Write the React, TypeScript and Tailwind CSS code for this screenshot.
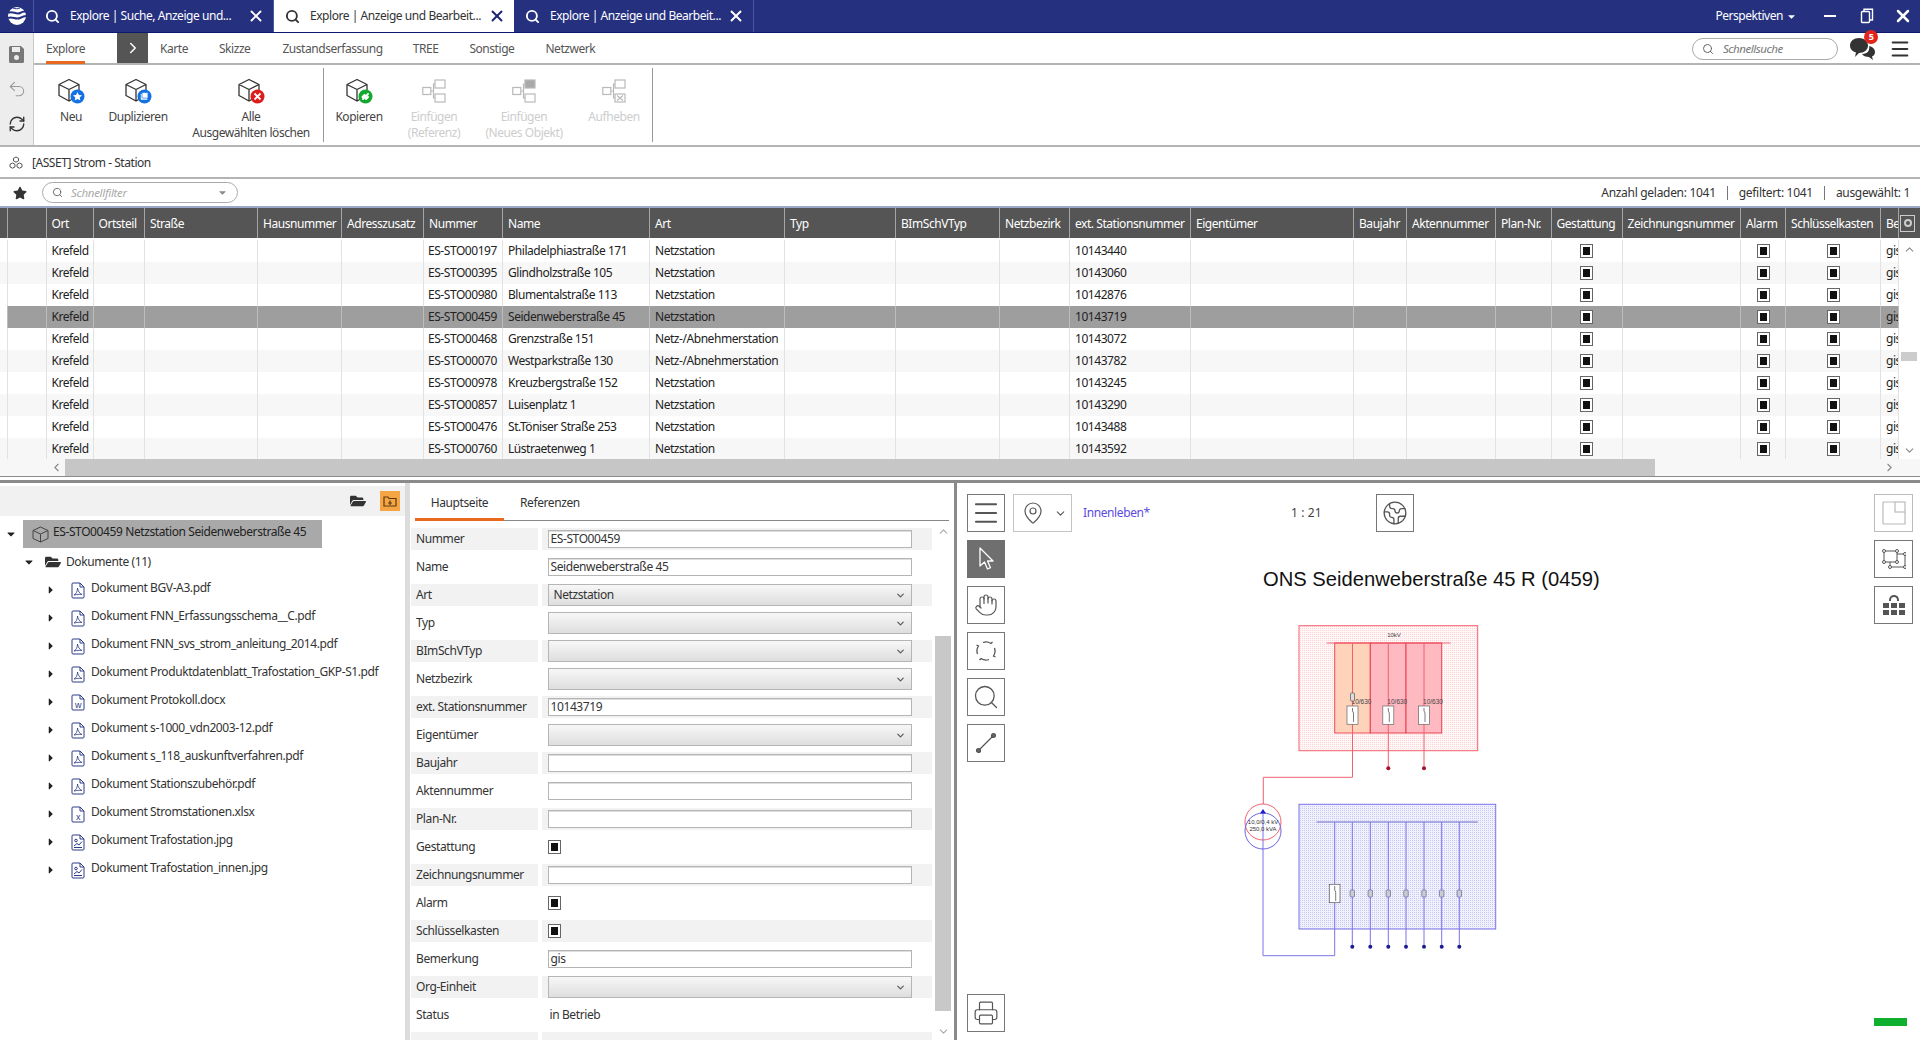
import {
  ChevronDown,
  ChevronLeft,
  ChevronRight,
  ChevronUp,
  Earth,
  Hand,
  MapPin,
  Menu,
  Printer,
  RefreshCw,
  Search,
  Undo2,
  X,
} from "lucide-react";
import { FaFolderOpen, FaStar, FaCaretDown, FaCaretRight } from "react-icons/fa";

const FONT = "font-['Noto_Sans','Open_Sans',sans-serif]";

const GRID =
  "grid grid-cols-[8px_38.5px_47px_51.5px_113px_84px_82px_79px_147px_135px_111px_104px_70px_121px_163px_53px_89px_55.5px_71px_118.5px_45px_95px_18px]";

const COLUMNS = [
  "",
  "",
  "Ort",
  "Ortsteil",
  "Straße",
  "Hausnummer",
  "Adresszusatz",
  "Nummer",
  "Name",
  "Art",
  "Typ",
  "BImSchVTyp",
  "Netzbezirk",
  "ext. Stationsnummer",
  "Eigentümer",
  "Baujahr",
  "Aktennummer",
  "Plan-Nr.",
  "Gestattung",
  "Zeichnungsnummer",
  "Alarm",
  "Schlüsselkasten",
  "Be",
];

const ROWS = [
  ["ES-STO00197", "Philadelphiastraße 171", "Netzstation", "10143440"],
  ["ES-STO00395", "Glindholzstraße 105", "Netzstation", "10143060"],
  ["ES-STO00980", "Blumentalstraße 113", "Netzstation", "10142876"],
  ["ES-STO00459", "Seidenweberstraße 45", "Netzstation", "10143719"],
  ["ES-STO00468", "Grenzstraße 151", "Netz-/Abnehmerstation", "10143072"],
  ["ES-STO00070", "Westparkstraße 130", "Netz-/Abnehmerstation", "10143782"],
  ["ES-STO00978", "Kreuzbergstraße 152", "Netzstation", "10143245"],
  ["ES-STO00857", "Luisenplatz 1", "Netzstation", "10143290"],
  ["ES-STO00476", "St.Töniser Straße 253", "Netzstation", "10143488"],
  ["ES-STO00760", "Lüstraetenweg 1", "Netzstation", "10143592"],
];

const DOCS: [string, string][] = [
  ["BGV-A3.pdf", "pdf"],
  ["FNN_Erfassungsschema__C.pdf", "pdf"],
  ["FNN_svs_strom_anleitung_2014.pdf", "pdf"],
  ["Produktdatenblatt_Trafostation_GKP-S1.pdf", "pdf"],
  ["Protokoll.docx", "w"],
  ["s-1000_vdn2003-12.pdf", "pdf"],
  ["s_118_auskunftverfahren.pdf", "pdf"],
  ["Stationszubehör.pdf", "pdf"],
  ["Stromstationen.xlsx", "x"],
  ["Trafostation.jpg", "img"],
  ["Trafostation_innen.jpg", "img"],
];

type Field = { label: string; kind: "input" | "select" | "check" | "text" | "none"; value?: string };

const FIELDS: Field[] = [
  { label: "Nummer", kind: "input", value: "ES-STO00459" },
  { label: "Name", kind: "input", value: "Seidenweberstraße 45" },
  { label: "Art", kind: "select", value: "Netzstation" },
  { label: "Typ", kind: "select" },
  { label: "BImSchVTyp", kind: "select" },
  { label: "Netzbezirk", kind: "select" },
  { label: "ext. Stationsnummer", kind: "input", value: "10143719" },
  { label: "Eigentümer", kind: "select" },
  { label: "Baujahr", kind: "input" },
  { label: "Aktennummer", kind: "input" },
  { label: "Plan-Nr.", kind: "input" },
  { label: "Gestattung", kind: "check" },
  { label: "Zeichnungsnummer", kind: "input" },
  { label: "Alarm", kind: "check" },
  { label: "Schlüsselkasten", kind: "check" },
  { label: "Bemerkung", kind: "input", value: "gis" },
  { label: "Org-Einheit", kind: "select" },
  { label: "Status", kind: "text", value: "in Betrieb" },
  { label: "", kind: "none" },
];

function Logo() {
  return (
    <svg width="20" height="20" viewBox="0 0 20 20">
      <circle cx="10" cy="10" r="9" fill="#fff" />
      <path d="M1 7c4-3 8 2 12 0s5-2 6-1M1 12c4-2 8 2 12 0s5-2 6-2" stroke="#25307f" strokeWidth="2" fill="none" />
      <path d="M6 2c2 1 5 1 7 0" stroke="#25307f" strokeWidth="1" fill="none" />
    </svg>
  );
}

function Tab({ label, active }: { label: string; active?: boolean }) {
  return (
    <div
      className={`flex w-[240px] items-center h-full pl-[11px] pr-[8px] ${
        active ? "bg-white text-[#333]" : "text-white border-r border-[#4a58a3]"
      }`}
    >
      <Search size={15} strokeWidth={3} className={active ? "text-[#333]" : "text-white"} />
      <span className="ml-[10px] flex-1 whitespace-nowrap text-[12px] tracking-[-0.45px]">{label}</span>
      <X size={18} strokeWidth={2.5} className={active ? "text-[#1b2470]" : "text-white"} />
    </div>
  );
}

function TitleBar() {
  return (
    <div className="flex h-[33px] items-stretch bg-[#25307f] border-b border-[#0c1a6e]">
      <div className="flex w-[34px] items-center justify-center border-r border-[#4a58a3]">
        <Logo />
      </div>
      <Tab label="Explore | Suche, Anzeige und..." />
      <Tab label="Explore | Anzeige und Bearbeit..." active />
      <Tab label="Explore | Anzeige und Bearbeit..." />
      <div className="ml-auto flex items-center text-white">
        <span className="text-[12px] tracking-[-0.45px]">Perspektiven</span>
        <FaCaretDown size={11} className="ml-[3px] mr-[27px]" />
        <div className="h-[2px] w-[12px] bg-white mr-[24px]" />
        <svg width="14" height="16" viewBox="0 0 14 16" className="mr-[19px]" fill="none" stroke="#fff" strokeWidth="1.4">
          <rect x="1.5" y="3.5" width="8" height="11" rx="1" />
          <path d="M4 3V1.2h8.5V12h-2.6" />
        </svg>
        <X size={20} strokeWidth={3} className="mr-[7px]" />
      </div>
    </div>
  );
}

function CubeIcon({ badge, color }: { badge: string; color: string }) {
  return (
    <svg width="28" height="26" viewBox="0 0 28 26" fill="none">
      <path d="M12 1.5 22 6.5v11L12 23 2 17.5v-11ZM2 6.5l10 5 10-5M12 11.5V23" stroke="#333" strokeWidth="1.3" strokeLinejoin="round" />
      <circle cx="20.5" cy="18.5" r="7" fill={color} />
      {badge === "star" && (
        <path d="m20.5 14 1.4 2.9 3.1.4-2.3 2.1.6 3.1-2.8-1.5-2.8 1.5.6-3.1-2.3-2.1 3.1-.4Z" fill="#fff" />
      )}
      {badge === "copy" && (
        <g fill="#fff">
          <rect x="16.8" y="15.8" width="6.5" height="6" rx="0.5" />
          <rect x="18" y="14.6" width="6" height="5.5" rx="0.5" stroke={color} strokeWidth="0.7" />
        </g>
      )}
      {badge === "x" && <path d="m17.5 15.5 6 6m0-6-6 6" stroke="#fff" strokeWidth="1.8" />}
      {badge === "link" && (
        <path d="m18 21 5-5M17.5 19l2-2m1.5 4 2-2" stroke="#fff" strokeWidth="2" strokeLinecap="round" />
      )}
    </svg>
  );
}

function TreeBoxes({ kind }: { kind: "ref" | "new" | "cancel" }) {
  return (
    <svg width="24" height="24" viewBox="0 0 24 24" fill="none" stroke="#b9b9b9" strokeWidth="1.2">
      <rect x="0.8" y="8.5" width="8" height="7" />
      <rect x="13" y="1" width="10" height="8" fill={kind === "new" ? "#a9a9a9" : "none"} />
      <rect x="13" y="15" width="10" height="8" />
      <path d="M9 12h2.5V5H13M11.5 12v7H13" />
      {kind === "cancel" && <path d="m15 16.5 6 5m0-5-6 5" />}
    </svg>
  );
}

function RibbonButton({
  width,
  lines,
  icon,
  disabled,
}: {
  width: string;
  lines: string[];
  icon: React.ReactNode;
  disabled?: boolean;
}) {
  return (
    <div className={`flex ${width} flex-col items-center pt-[13px] ${disabled ? "text-[#cdcdcd]" : "text-[#444]"}`}>
      <div className="flex h-[26px] items-center justify-center">{icon}</div>
      <div className="mt-[5px] text-center text-[12px] leading-[16px] tracking-[-0.45px] whitespace-nowrap">
        {lines.map((l) => (
          <div key={l}>{l}</div>
        ))}
      </div>
    </div>
  );
}

function Ribbon() {
  const tabs: [string, string][] = [
    ["Karte", "ml-[12px]"],
    ["Skizze", "ml-[31px]"],
    ["Zustandserfassung", "ml-[32px]"],
    ["TREE", "ml-[30px]"],
    ["Sonstige", "ml-[31px]"],
    ["Netzwerk", "ml-[31px]"],
  ];
  return (
    <div className="flex h-[114px] border-b-2 border-[#b4b4b4]">
      <div className="flex w-[34px] flex-col items-center border-r border-[#c8c8c8] bg-[#ededed] pt-[12px] text-[#6f6f6f]">
        <svg width="17" height="19" viewBox="0 0 17 19">
          <path d="M1 2.5A1.5 1.5 0 0 1 2.5 1H13l3 3v12.5a1.5 1.5 0 0 1-1.5 1.5h-12A1.5 1.5 0 0 1 1 16.500Z" fill="#777" />
          <rect x="4" y="2" width="8" height="5" fill="#ededed" />
          <circle cx="8.500" cy="12.500" r="2.500" fill="#ededed" />
        </svg>
        <Undo2 size={20} strokeWidth={1.3} className="mt-[15px] text-[#9a9a9a]" />
        <RefreshCw size={18} strokeWidth={1.8} className="mt-[16px] text-[#333]" />
      </div>
      <div className="flex flex-1 flex-col">
        <div className="flex h-[32px] items-stretch border-b-2 border-[#b4b4b4] text-[12px] tracking-[-0.45px] text-[#555]">
          <div className="relative ml-[12px] flex w-[39px] items-center justify-center pt-[2px]">
            Explore
            <div className="absolute bottom-[-1px] left-0 right-0 h-[3px] bg-[#e8691d]" />
          </div>
          <div className="ml-[32px] flex w-[31px] items-center justify-center bg-[#555] text-white">
            <ChevronRight size={18} strokeWidth={2} />
          </div>
          {tabs.map(([t, ml]) => (
            <div key={t} className={`flex items-center pt-[2px] ${ml}`}>
              {t}
            </div>
          ))}
          <div className="ml-auto flex items-center pr-[9px] pt-[1px]">
            <div className="flex h-[22px] w-[146px] items-center rounded-full border border-[#aaa] pl-[9px]">
              <Search size={12} className="text-[#666]" />
              <span className="ml-[9px] text-[11.5px] italic text-[#777]">Schnellsuche</span>
            </div>
            <div className="relative ml-[11px] h-[24px] w-[28px]">
              <svg width="28" height="24" viewBox="0 0 28 24" fill="#333">
                <path d="M10 1c5 0 9 3 9 7.500S15 16 10 16l-4 4 1-4.500C3.500 14.500 1 12 1 8.500 1 4 5 1 10 1Z" />
                <path d="M20 9c3 .5 6 2.500 6 6 0 2-1 3.500-3 4.500l1 3.500-4-3c-3 0-6-1-7-3 6 0 8-4 7-8.500Z" />
              </svg>
              <div className="absolute right-[-1px] top-[-7px] flex h-[14px] w-[14px] items-center justify-center rounded-full bg-[#e1251b] text-[9px] font-bold text-white">
                5
              </div>
            </div>
            <Menu size={22} strokeWidth={2.2} className="ml-[12px] text-[#333]" />
          </div>
        </div>
        <div className="flex flex-1 items-stretch">
          <RibbonButton width="w-[68px] ml-[3px]" lines={["Neu"]} icon={<CubeIcon badge="star" color="#1272e4" />} />
          <RibbonButton width="w-[64px] ml-[1px]" lines={["Duplizieren"]} icon={<CubeIcon badge="copy" color="#1272e4" />} />
          <RibbonButton width="w-[124px] ml-[19px]" lines={["Alle", "Ausgewählten löschen"]} icon={<CubeIcon badge="x" color="#dd1c1c" />} />
          <div className="my-[3px] ml-[10px] w-px bg-[#999]" />
          <RibbonButton width="w-[64px] ml-[3px]" lines={["Kopieren"]} icon={<CubeIcon badge="link" color="#13a92e" />} />
          <RibbonButton width="w-[86px]" lines={["Einfügen", "(Referenz)"]} icon={<TreeBoxes kind="ref" />} disabled />
          <RibbonButton width="w-[94px]" lines={["Einfügen", "(Neues Objekt)"]} icon={<TreeBoxes kind="new" />} disabled />
          <RibbonButton width="w-[86px]" lines={["Aufheben"]} icon={<TreeBoxes kind="cancel" />} disabled />
          <div className="my-[3px] ml-[-5px] w-px bg-[#999]" />
        </div>
      </div>
    </div>
  );
}

function Breadcrumb() {
  return (
    <div className="flex h-[32px] items-center border-b-2 border-[#b4b4b4] pl-[9px] pt-[2px] text-[12px] tracking-[-0.45px] text-[#333]">
      <svg width="14" height="14" viewBox="0 0 14 14" fill="none" stroke="#555" strokeWidth="1">
        <path d="m7 1 2.500 1.300v2.600L7 6.200 4.500 4.900V2.300ZM3.500 7l2.500 1.300v2.600l-2.500 1.300L1 10.900V8.300ZM10.500 7 13 8.300v2.600l-2.500 1.300L8 10.900V8.300Z" />
      </svg>
      <span className="ml-[9px]">[ASSET] Strom - Station</span>
    </div>
  );
}

function FilterRow() {
  return (
    <div className="flex h-[27px] items-center text-[12px] tracking-[-0.3px] text-[#333]">
      <FaStar size={14} className="ml-[13px] text-[#333]" />
      <div className="ml-[15px] flex h-[21px] w-[196px] items-center rounded-full border border-[#aaa] pl-[9px]">
        <Search size={11} className="text-[#666]" />
        <span className="ml-[8px] flex-1 text-[11.5px] italic text-[#aaa]">Schnellfilter</span>
        <FaCaretDown size={11} className="mr-[9px] text-[#888]" />
      </div>
      <div className="ml-auto flex items-center pr-[10px]">
        <span>Anzahl geladen: 1041</span>
        <div className="mx-[11px] h-[14px] w-px bg-[#777]" />
        <span>gefiltert: 1041</span>
        <div className="mx-[11px] h-[14px] w-px bg-[#777]" />
        <span>ausgewählt: 1</span>
      </div>
    </div>
  );
}

function Check() {
  return (
    <div className="flex h-[14px] w-[13px] items-center justify-center border border-[#666] bg-white">
      <div className="h-[8px] w-[7px] bg-[#111]" />
    </div>
  );
}

function DataTable() {
  return (
    <div className="flex h-[271px] flex-col border-t-2 border-[#9aa7c6] border-b border-b-[#8a8a8a] text-[12px] tracking-[-0.45px]">
      <div className="flex h-[251px]">
        <div className="w-[1899px] overflow-hidden">
          <div className={`${GRID} h-[30px] w-[1899px] bg-[#555] text-white`}>
            {COLUMNS.map((c, i) => (
              <div key={i} className="flex items-center overflow-hidden whitespace-nowrap border-r border-[#a5a5a5] pl-[5px] pt-[2px]">
                {c}
              </div>
            ))}
          </div>
          <div className="pt-[2px] bg-white">
            {ROWS.map((r, i) => (
              <Row key={r[0]} cells={r} index={i} />
            ))}
          </div>
        </div>
        <div className="flex w-[21px] flex-col bg-white">
          <div className="flex h-[30px] items-center bg-[#555] pl-[1px]">
            <div className="flex h-[17px] w-[15px] items-center justify-center border border-[#ccc]">
              <div className="h-[8px] w-[8px] rounded-full border-2 border-[#ccc]" />
            </div>
          </div>
          <div className="relative flex-1">
            <ChevronUp size={13} className="absolute left-[4px] top-[5px] text-[#888]" />
            <div className="absolute left-[2px] top-[114px] h-[9px] w-[16px] bg-[#ccc]" />
            <ChevronDown size={13} className="absolute bottom-[2px] left-[4px] text-[#888]" />
          </div>
        </div>
      </div>
      <div className="flex h-[18px] items-center bg-[#f7f7f7] pl-[50px]">
        <ChevronLeft size={13} className="text-[#888]" />
        <div className="ml-[2px] h-full w-[1590px] bg-[#c6c6c6]" />
        <ChevronRight size={13} className="ml-[228px] text-[#888]" />
      </div>
    </div>
  );
}

function Row({ cells, index }: { cells: string[]; index: number }) {
  const selected = index === 3;
  const bg = selected ? "bg-[#9e9e9e]" : index % 2 === 1 ? "bg-[#f7f7f7]" : "bg-white";
  const line = selected ? "border-[#bdbdbd]" : "border-[#e2e2e2]";
  const values: Record<number, React.ReactNode> = {
    2: "Krefeld",
    7: cells[0],
    8: cells[1],
    9: cells[2],
    13: cells[3],
    18: <Check />,
    20: <Check />,
    21: <Check />,
    22: "gis",
  };
  return (
    <div className={`${GRID} h-[22px] w-[1899px] ${selected ? "" : bg} text-[#222]`}>
      {COLUMNS.map((_, i) => (
        <div
          key={i}
          className={`flex items-center overflow-hidden whitespace-nowrap border-r ${line} ${
            i === 18 || i === 20 || i === 21 ? "justify-center" : i === 7 ? "pl-[4px]" : "pl-[5px]"
          } ${selected && i > 0 ? bg : ""}`}
        >
          {values[i]}
        </div>
      ))}
    </div>
  );
}

function DocIcon({ type }: { type: string }) {
  return (
    <svg width="14" height="17" viewBox="0 0 14 17" fill="none" stroke="#2f3a86" strokeWidth="1">
      <path d="M1 2a1 1 0 0 1 1-1h7l4 4v10a1 1 0 0 1-1 1H2a1 1 0 0 1-1-1Z" />
      <path d="M9 1v4h4" />
      {type === "pdf" && <path d="M3 13c2-1 3.500-3.500 3.500-7 .5 3 2 5.500 4.500 6.500-3-.5-5 0-8 .5Z" strokeWidth="0.8" />}
      {type === "w" && (
        <text x="7" y="14" textAnchor="middle" fontSize="9" fill="#2f3a86" stroke="none" fontFamily="Liberation Sans, sans-serif">
          w
        </text>
      )}
      {type === "x" && (
        <text x="7" y="14" textAnchor="middle" fontSize="9" fill="#2f3a86" stroke="none" fontFamily="Liberation Sans, sans-serif">
          x
        </text>
      )}
      {type === "img" && (
        <>
          <circle cx="5" cy="6.500" r="1.300" />
          <path d="M3 13.500h8M3 12l3-2.500 2 1.500 3-3.500" />
        </>
      )}
    </svg>
  );
}

function TreePanel() {
  return (
    <div className="flex h-full flex-col text-[#333]">
      <div className="mt-[3px] flex h-[30px] items-center justify-end bg-[#f1f1f1] pr-[5px]">
        <FaFolderOpen size={16} className="mr-[14px] text-[#333]" />
        <div className="flex h-[20px] w-[20px] items-center justify-center bg-[#f5a544]">
          <svg width="14" height="12" viewBox="0 0 14 12" fill="none" stroke="#5c3a10" strokeWidth="1.2">
            <path d="M1 2h4l1 1.500h7V11H1ZM5 8h4M7 10V5.500" />
          </svg>
        </div>
      </div>
      <div className="flex h-[32px] items-center pt-[4px] pl-[5px]">
        <FaCaretDown size={12} className="text-[#222]" />
        <div className="ml-[6px] flex h-[28px] w-[299px] items-center bg-[#a9a9a9] pl-[9px]">
          <svg width="17" height="17" viewBox="0 0 17 17" fill="none" stroke="#444" strokeWidth="1">
            <path d="M8.500 1 16 4.500v8L8.500 16 1 12.500v-8ZM1 4.500 8.500 8 16 4.500M8.500 8v8" />
          </svg>
          <span className="ml-[4px] mb-[5px] text-[12px] tracking-[-0.4px] text-[#222]">ES-STO00459 Netzstation Seidenweberstraße 45</span>
        </div>
      </div>
      <div className="flex h-[28px] items-center pl-[23px] text-[12px] tracking-[-0.4px]">
        <FaCaretDown size={12} className="text-[#222]" />
        <FaFolderOpen size={16} className="ml-[10px] text-[#333]" />
        <span className="ml-[5px]">Dokumente (11)</span>
      </div>
      {DOCS.map(([name, type]) => (
        <div key={name} className="flex h-[28px] items-center pl-[45px] text-[12px] tracking-[-0.4px]">
          <FaCaretRight size={12} className="text-[#222]" />
          <div className="ml-[14px]">
            <DocIcon type={type} />
          </div>
          <span className="ml-[6px] mb-[5px] whitespace-nowrap">Dokument {name}</span>
        </div>
      ))}
    </div>
  );
}

function FieldValue({ field }: { field: Field }) {
  if (field.kind === "input") {
    return (
      <div className="flex h-[18px] w-[364px] items-center border border-[#b5b5b5] bg-white pl-[2px] shadow-[inset_0_1px_0_#ddd]">
        {field.value}
      </div>
    );
  }
  if (field.kind === "select") {
    return (
      <div className="flex h-[22px] w-[364px] items-center justify-between border border-[#b5b5b5] bg-gradient-to-b from-[#f7f7f7] to-[#dedede] pl-[5px] pr-[5px]">
        <span>{field.value}</span>
        <ChevronDown size={11} strokeWidth={2.5} className="text-[#555]" />
      </div>
    );
  }
  if (field.kind === "check") return <Check />;
  if (field.kind === "text") return <span className="pl-[2px]">{field.value}</span>;
  return null;
}

function FormPanel() {
  return (
    <div className="flex h-full flex-col overflow-hidden text-[12px] tracking-[-0.4px] text-[#333]">
      <div className="mx-[5px] flex h-[38px] shrink-0 items-stretch border-b border-[#888]">
        <div className="relative flex w-[89px] items-center justify-center pt-[2px]">
          Hauptseite
          <div className="absolute bottom-[-1px] left-0 right-0 h-[3px] bg-[#e8691d]" />
        </div>
        <div className="ml-[16px] flex items-center pt-[2px]">Referenzen</div>
      </div>
      <div className="mt-[4px] flex flex-1 overflow-hidden">
        <div className="ml-[1px] w-[523px]">
          {FIELDS.map((f, i) => (
            <div key={i} className="grid h-[28px] grid-cols-[126.5px_390px] gap-x-[4.5px] py-[3px]">
              <div className={`flex items-center pl-[5px] ${i % 2 === 0 ? "bg-[#f2f2f2]" : ""}`}>{f.label}</div>
              <div className={`flex items-center pl-[5.5px] ${i % 2 === 0 ? "bg-[#f2f2f2]" : ""}`}>
                <FieldValue field={f} />
              </div>
            </div>
          ))}
        </div>
        <div className="relative ml-[1px] w-[16px] bg-white">
          <ChevronUp size={13} className="absolute left-[2px] top-[0px] text-[#aaa]" />
          <div className="absolute inset-x-0 top-[111px] h-[375px] bg-[#c8c8c8]" />
          <ChevronDown size={13} className="absolute bottom-[2px] left-[2px] text-[#aaa]" />
        </div>
      </div>
    </div>
  );
}

function ToolButton({ children, active }: { children: React.ReactNode; active?: boolean }) {
  return (
    <div
      className={`flex h-[38px] w-[38px] items-center justify-center border ${
        active ? "border-[#6f6f6f] bg-[#6f6f6f] text-white" : "border-[#777] bg-white text-[#555]"
      }`}
    >
      {children}
    </div>
  );
}

function Diagram() {
  const lv = [1352.3, 1370.3, 1388.3, 1406, 1424, 1441.7, 1459.3];
  const ox = 1240;
  const oy = 620;
  return (
    <svg width="265" height="345" viewBox={`${ox} ${oy} 265 345`} className="block" fontFamily="Liberation Sans, sans-serif">
      <defs>
        <pattern id="hr" width="2" height="2" patternUnits="userSpaceOnUse">
          <rect width="2" height="2" fill="#fff6f6" />
          <rect width="1" height="1" fill="#fbd5d9" />
        </pattern>
        <pattern id="hb" width="2" height="2" patternUnits="userSpaceOnUse">
          <rect width="2" height="2" fill="#f0f0fe" />
          <rect width="1" height="1" fill="#c9c9f0" />
        </pattern>
      </defs>
      <rect x="1299" y="625.7" width="178.700" height="125" fill="url(#hr)" stroke="#f4606e" />
      <rect x="1334.700" y="643" width="35.600" height="90" fill="#ffd3ba" stroke="#f04a5a" />
      <rect x="1370.300" y="643" width="35.700" height="90" fill="#ffb9c1" stroke="#e8404f" />
      <rect x="1406" y="643" width="35.700" height="90" fill="#ffb9c1" stroke="#e8404f" />
      <path d="M1326.700 643h124" stroke="#ee4a5a" strokeWidth="0.8" />
      <text x="1394" y="637" textAnchor="middle" fontSize="6" fill="#444">10kV</text>
      <path d="M1352.500 643v134.300h-89.200V804M1388.300 643v125M1424 643v125" stroke="#f0616f" fill="none" />
      {[1352.5, 1388.3, 1424].map((x) => (
        <g key={x}>
          <rect x={x - 5.5} y="706" width="11" height="18.300" fill="#fff" stroke="#666" strokeWidth="0.7" />
          <path d={`M${x} 708v3l1 2v9`} stroke="#444" strokeWidth="0.7" fill="none" />
          <text x={x + 9} y="703.500" textAnchor="middle" fontSize="6.5" fill="#444">10/630</text>
        </g>
      ))}
      <rect x="1350.500" y="693" width="4" height="8" rx="1" fill="#ddd" stroke="#555" strokeWidth="0.7" />
      <circle cx="1388.300" cy="768.300" r="2" fill="#a5102a" />
      <circle cx="1424" cy="768.300" r="2" fill="#a5102a" />

      <rect x="1299" y="804.300" width="196.700" height="124.700" fill="url(#hb)" stroke="#7a73e8" />
      <path d="M1316.700 822h161" stroke="#6f6fc8" />
      <path d="M1334.700 822v133.700H1263V813" stroke="#7a73e8" fill="none" />
      <rect x="1329.300" y="884.300" width="10.700" height="18.400" fill="#fff" stroke="#555" strokeWidth="0.7" />
      <path d="M1334.700 886v4l1 2v9" stroke="#444" strokeWidth="0.7" fill="none" />
      {lv.map((x) => (
        <g key={x}>
          <path d={`M${x} 822v124.700`} stroke="#7a73e8" />
          <rect x={x - 2.2} y="890" width="4.400" height="7" rx="1" fill="#ccc" stroke="#6666a8" strokeWidth="0.7" />
          <circle cx={x} cy="946.700" r="2" fill="#1c1c90" />
        </g>
      ))}
      <circle cx="1263" cy="822" r="18" fill="none" stroke="#f0616f" />
      <circle cx="1263" cy="831" r="18" fill="none" stroke="#6b64e0" />
      <path d="m1263 809 3 4.500h-6Z" fill="#1a1ad0" />
      <text x="1263" y="824" textAnchor="middle" fontSize="6" fill="#333">10,0/0,4 kV</text>
      <text x="1263" y="831" textAnchor="middle" fontSize="6" fill="#333">250,0 kVA</text>
    </svg>
  );
}

function MapPanel() {
  return (
    <div className="flex h-full pt-[11px] pl-[10px] pr-[7px]">
      <div className="flex w-[38px] flex-col gap-[8px]">
        <ToolButton>
          <Menu size={30} strokeWidth={1.7} className="text-[#555]" />
        </ToolButton>
        <ToolButton active>
          <svg width="24" height="26" viewBox="0 0 24 26" fill="none" stroke="#fff" strokeWidth="1.3" strokeLinejoin="round">
            <path d="M6 2v18l4.500-4 3 7 3-1.300-3-6.700H19Z" />
          </svg>
        </ToolButton>
        <ToolButton>
          <Hand size={24} strokeWidth={1.2} />
        </ToolButton>
        <ToolButton>
          <svg width="24" height="24" viewBox="0 0 24 24" fill="none" stroke="#555" strokeWidth="1.3">
            <path d="M9 3.500a9 9 0 0 1 8 1l1.500-1.500M20.500 9a9 9 0 0 1-1 8l2 1M15 20.500a9 9 0 0 1-8-1L5.500 21M3.500 15a9 9 0 0 1 1-8l-2-1" />
          </svg>
        </ToolButton>
        <ToolButton>
          <Search size={28} strokeWidth={1.1} />
        </ToolButton>
        <ToolButton>
          <svg width="24" height="24" viewBox="0 0 24 24" fill="none" stroke="#555" strokeWidth="1.2">
            <path d="m5 19 14-14" />
            <circle cx="4.500" cy="19.500" r="2" fill="#666" />
            <circle cx="19.500" cy="4.500" r="2" fill="#666" />
          </svg>
        </ToolButton>
        <div className="mt-auto mb-[8px]">
          <ToolButton>
            <Printer size={26} strokeWidth={1.1} />
          </ToolButton>
        </div>
      </div>
      <div className="flex flex-1 flex-col">
        <div className="flex h-[38px] items-center">
          <div className="ml-[8px] flex h-[38px] w-[59px] items-center border border-[#c4c4c4] pl-[7px] text-[#555]">
            <MapPin size={24} strokeWidth={1.2} />
            <ChevronDown size={13} strokeWidth={2} className="ml-[9px]" />
          </div>
          <span className="ml-[11px] w-[64px] whitespace-nowrap text-[12px] tracking-[-0.4px] text-[#5b4be0]">Innenleben*</span>
          <span className="ml-[144px] w-[28px] whitespace-nowrap text-[12px] tracking-[0.1px] text-[#444]">1 : 21</span>
          <div className="ml-[57px]">
            <ToolButton>
              <Earth size={26} strokeWidth={1.2} />
            </ToolButton>
          </div>
        </div>
        <div className="mt-[35px] ml-[258px] w-[340px] font-['Liberation_Sans',sans-serif] text-[20.2px] leading-[24px] text-[#111] whitespace-nowrap">
          ONS Seidenweberstraße 45 R (0459)
        </div>
        <div className="mt-[29px] ml-[235px]">
          <Diagram />
        </div>
      </div>
      <div className="flex w-[39px] flex-col gap-[8px]">
        <div className="flex h-[38px] w-[39px] items-center justify-center border border-[#bbb] text-[#bbb]">
          <svg width="24" height="24" viewBox="0 0 24 24" fill="none" stroke="#bbb" strokeWidth="1.2">
            <path d="M13 1H2a1 1 0 0 0-1 1v20a1 1 0 0 0 1 1h21V11" />
            <rect x="13" y="1" width="10" height="10" />
          </svg>
        </div>
        <div className="flex h-[38px] w-[39px] items-center justify-center border border-[#777]">
          <svg width="24" height="20" viewBox="0 0 24 20" fill="none" stroke="#555" strokeWidth="1">
            <path d="M2 2h13v11H2ZM8 13v5h15V5h-8" />
            {[[2, 2], [15, 2], [2, 13], [15, 13], [8, 18], [23, 18], [23, 5]].map(([x, y]) => (
              <circle key={`${x}-${y}`} cx={x} cy={y} r="1.500" fill="#fff" />
            ))}
          </svg>
        </div>
        <div className="flex h-[38px] w-[39px] flex-col items-center justify-center border border-[#777]">
          <div className="h-[6px] w-[10px] rounded-t-full border-2 border-b-0 border-[#555]" />
          <div className="mt-[2px] grid grid-cols-3 gap-[2px]">
            {[0, 1, 2, 3, 4, 5].map((i) => (
              <div key={i} className="h-[5px] w-[6px] bg-[#555]" />
            ))}
          </div>
        </div>
        <div className="mt-auto mb-[14px] h-[8px] w-[33px] bg-[#0fb02f]" />
      </div>
    </div>
  );
}

export default function App() {
  return (
    <div className={`flex h-[1040px] w-[1920px] flex-col overflow-hidden bg-white ${FONT}`}>
      <TitleBar />
      <Ribbon />
      <Breadcrumb />
      <FilterRow />
      <DataTable />
      <div className="mt-[3px] h-[3px] bg-[#8a8a8a]" />
      <div className="grid min-h-0 flex-1 grid-cols-[405px_5px_544px_3px_963px] grid-rows-[557px]">
        <TreePanel />
        <div className="bg-[#dcdcdc]" />
        <FormPanel />
        <div className="bg-[#8a8a8a]" />
        <MapPanel />
      </div>
    </div>
  );
}
